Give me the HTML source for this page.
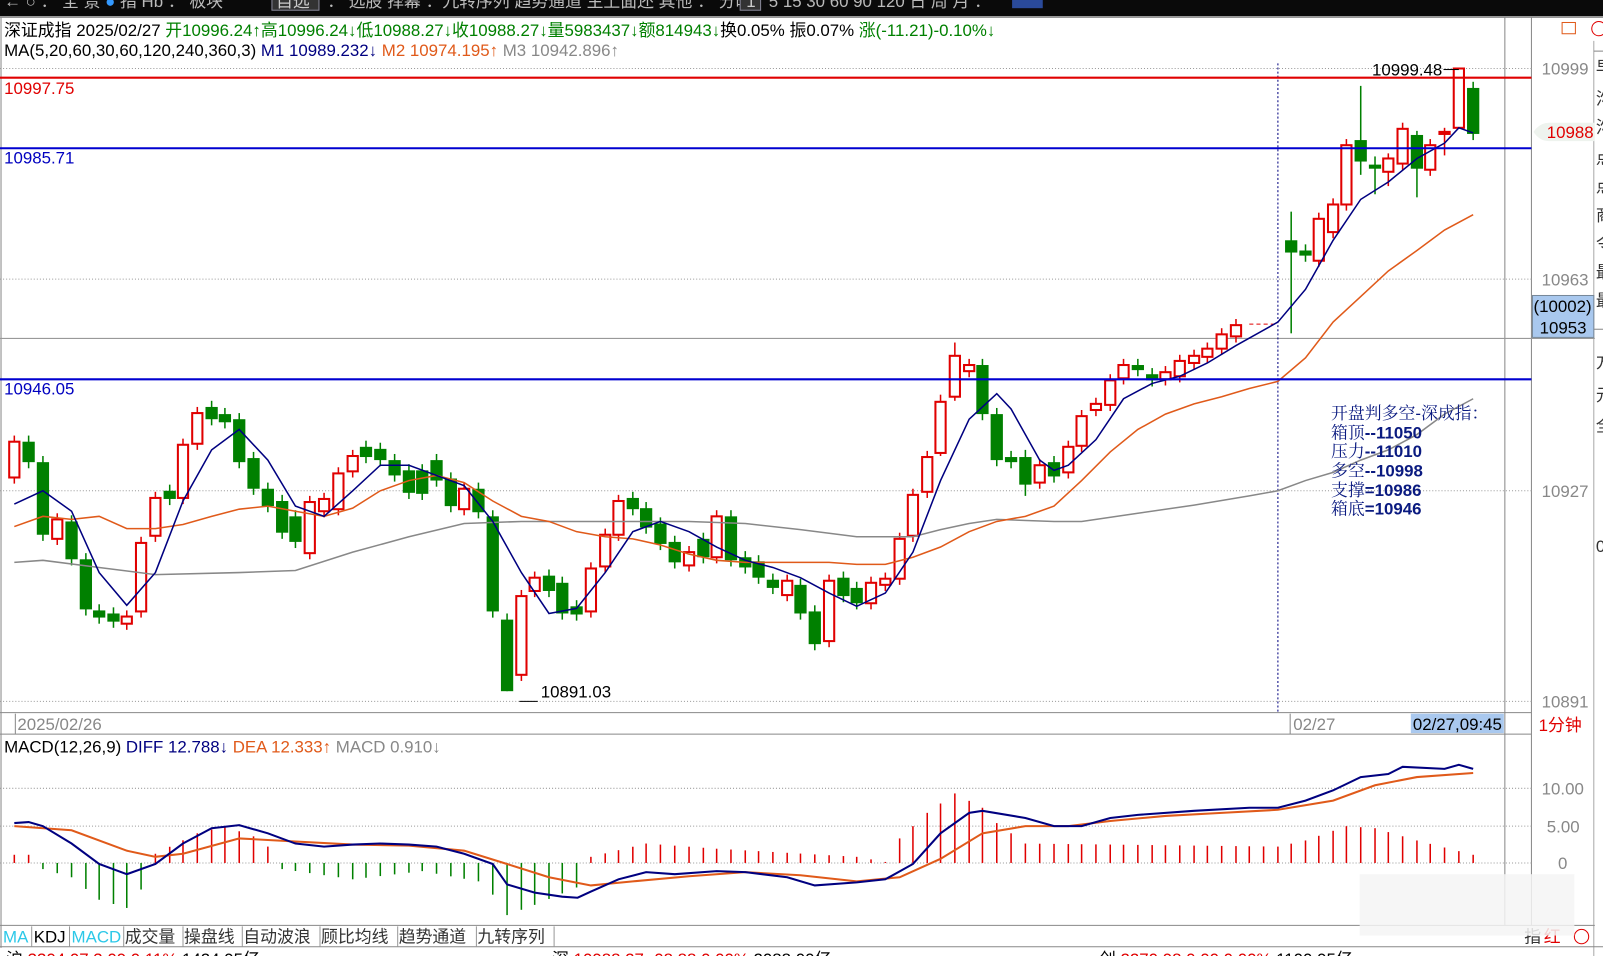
<!DOCTYPE html>
<html><head><meta charset="utf-8">
<style>
html,body{margin:0;padding:0;background:#fff;overflow:hidden}
svg{display:block}
text{font-family:"Liberation Sans","Noto Sans CJK SC",sans-serif;font-size:16.5px}
.an{font-family:"Liberation Sans","Noto Serif CJK SC",serif;font-size:16.5px}
.an tspan.n{font-weight:bold}
</style></head><body>
<svg id="s" width="1603" height="956" viewBox="0 0 1568 935" preserveAspectRatio="none" xmlns="http://www.w3.org/2000/svg">
<rect x="0" y="0" width="1568" height="935" fill="#fff"/>
<!-- top bar -->
<rect x="0" y="0" width="1568" height="16" fill="#0a0a0a"/>
<text x="4" y="7" fill="#bbb" font-size="15">← ○ ： 全 景 <tspan fill="#39f">●</tspan> 指 <tspan>Hb</tspan> ： 板块 </text>
<rect x="266" y="-4" width="46" height="14" fill="#333" stroke="#889"/>
<text x="270" y="7" fill="#ccc" font-size="15">自选</text>
<text x="320" y="7" fill="#bbb" font-size="15">：  选股  择幕   ：九转序列  趋势通道  主上面还  其他    ：  分时</text>
<rect x="724" y="-4" width="20" height="14" fill="#333" stroke="#889"/>
<text x="730" y="7" fill="#ccc" font-size="15">1</text>
<text x="752" y="7" fill="#bbb" font-size="15">5  15  30  60  90  120  日  周  月   ：</text>
<rect x="990" y="-4" width="30" height="12" fill="#2a4a9a"/>
<!-- header lines -->
<text x="4" y="35" fill="#000">深证成指 2025/02/27 <tspan fill="#008000">开10996.24↑高10996.24↓低10988.27↓收10988.27↓量5983437↓额814943↓</tspan>换0.05% 振0.07%  <tspan fill="#008000">涨(-11.21)-0.10%↓</tspan></text>
<text x="4" y="55" fill="#000">MA(5,20,60,30,60,120,240,360,3)  <tspan fill="#000080">M1 10989.232↓</tspan>  <tspan fill="#e05a1a">M2 10974.195↑</tspan>  <tspan fill="#888">M3 10942.896↑</tspan></text>
<!-- frame lines -->
<line x1="0" y1="17" x2="1568" y2="17" stroke="#888"/>
<line x1="1472" y1="17" x2="1472" y2="905" stroke="#888"/>
<line x1="1498" y1="17" x2="1498" y2="905" stroke="#888"/>
<line x1="1559" y1="40" x2="1559" y2="935" stroke="#aaa"/>
<line x1="1" y1="17" x2="1" y2="927" stroke="#888"/>
<line x1="0" y1="331" x2="1560" y2="331" stroke="#999"/>
<line x1="0" y1="697" x2="1498" y2="697" stroke="#888"/>
<line x1="0" y1="718" x2="1498" y2="718" stroke="#888"/>
<line x1="0" y1="905" x2="1560" y2="905" stroke="#888"/>
<line x1="0" y1="926" x2="1568" y2="926" stroke="#888"/>
<!-- grid -->
<g stroke="#999" stroke-dasharray="1,2">
<line x1="0" y1="67" x2="1498" y2="67"/>
<line x1="0" y1="273" x2="1498" y2="273"/>
<line x1="0" y1="480" x2="1498" y2="480"/>
<line x1="0" y1="686" x2="1498" y2="686"/>
<line x1="0" y1="771" x2="1498" y2="771"/>
<line x1="0" y1="808" x2="1498" y2="808"/>
<line x1="0" y1="844" x2="1498" y2="844"/>
</g>
<line x1="1250" y1="62" x2="1250" y2="697" stroke="#000080" stroke-dasharray="2,2"/>
<g id="chart"></g>
<!-- horizontal levels -->
<line x1="0" y1="76" x2="1498" y2="76" stroke="#e00000" stroke-width="2"/>
<line x1="0" y1="145" x2="1498" y2="145" stroke="#0000d0" stroke-width="2"/>
<line x1="0" y1="371" x2="1498" y2="371" stroke="#0000d0" stroke-width="2"/>
<text x="4" y="92" fill="#e00000">10997.75</text>
<text x="4" y="160" fill="#0000c0">10985.71</text>
<text x="4" y="386" fill="#0000c0">10946.05</text>
<text x="1342" y="74" fill="#000">10999.48</text>
<line x1="1412" y1="68" x2="1427" y2="68" stroke="#000"/>
<text x="529" y="682" fill="#000">10891.03</text>
<line x1="508" y1="686" x2="526" y2="686" stroke="#000"/>
<!-- annotation -->
<g fill="#0a1a80" class="an">
<text x="1302" y="410" class="an">开盘判多空-深成指：</text>
<text x="1302" y="429" class="an">箱顶<tspan class="n">--11050</tspan></text>
<text x="1302" y="447" class="an">压力<tspan class="n">--11010</tspan></text>
<text x="1302" y="466" class="an">多空<tspan class="n">--10998</tspan></text>
<text x="1302" y="485" class="an">支撑<tspan class="n">=10986</tspan></text>
<text x="1302" y="503" class="an">箱底<tspan class="n">=10946</tspan></text>
</g>
<!-- right axis -->
<g fill="#888">
<text x="1508" y="73">10999</text>
<text x="1508" y="279">10963</text>
<text x="1508" y="486">10927</text>
<text x="1508" y="692">10891</text>
</g>
<path d="M1500 129 Q1506 120 1515 120 L1560 120 L1560 138 L1515 138 Q1506 138 1500 129Z" fill="#eef3ee"/>
<text x="1513" y="135" fill="#e00000">10988</text>
<rect x="1499" y="289" width="60" height="41" fill="#a9c8ee" stroke="#789"/>
<text x="1500" y="305" fill="#000">(10002)</text>
<text x="1506" y="326" fill="#000">10953</text>
<rect x="1528" y="22" width="13" height="11" fill="none" stroke="#e05a1a"/>
<circle cx="1564" cy="28" r="7" fill="none" stroke="#e00000"/>
<line x1="1559" y1="50" x2="1568" y2="50" stroke="#888"/>
<line x1="1559" y1="322" x2="1568" y2="322" stroke="#888"/>
<g fill="#333">
<text x="1561" y="72">早</text><text x="1561" y="102">沟</text><text x="1561" y="130">沟</text><text x="1561" y="160">点</text><text x="1561" y="188">点</text><text x="1561" y="216">商</text><text x="1561" y="244">令</text><text x="1561" y="272">最</text><text x="1561" y="300">最</text>
<text x="1561" y="360">方</text><text x="1561" y="392">元</text><text x="1561" y="422">全</text><text x="1561" y="540">0</text>
</g>
<!-- date bar -->
<line x1="15" y1="698" x2="15" y2="718" stroke="#888"/>
<text x="17" y="714" fill="#888">2025/02/26</text>
<line x1="1262" y1="698" x2="1262" y2="718" stroke="#888"/>
<text x="1265" y="714" fill="#888">02/27</text>
<rect x="1380" y="698" width="91" height="19" fill="#a9c8ee"/>
<text x="1382" y="714" fill="#000">02/27,09:45</text>
<text x="1505" y="715" fill="#e00000">1分钟</text>
<!-- MACD header -->
<text x="4" y="736" fill="#000">MACD(12,26,9)  <tspan fill="#000080">DIFF 12.788↓</tspan>  <tspan fill="#e05a1a">DEA 12.333↑</tspan>  <tspan fill="#888">MACD 0.910↓</tspan></text>
<g fill="#888">
<text x="1508" y="777">10.00</text>
<text x="1513" y="814">5.00</text>
<text x="1524" y="850">0</text>
</g>
<!-- tabs -->
<g font-size="16.5">
<text x="3" y="922" fill="#2cc8e8" font-size="16.5">MA</text>
<line x1="31" y1="906" x2="31" y2="926" stroke="#999"/>
<text x="33" y="922" fill="#000" font-size="16.5">KDJ</text>
<line x1="68" y1="906" x2="68" y2="926" stroke="#999"/>
<text x="70" y="922" fill="#2cc8e8" font-size="16.5">MACD</text>
<line x1="121" y1="906" x2="121" y2="926" stroke="#999"/>
<text x="122" y="922" fill="#333" font-size="16.5">成交量</text>
<line x1="179" y1="906" x2="179" y2="926" stroke="#999"/>
<text x="180" y="922" fill="#333" font-size="16.5">操盘线</text>
<line x1="237" y1="906" x2="237" y2="926" stroke="#999"/>
<text x="238" y="922" fill="#333" font-size="16.5">自动波浪</text>
<line x1="313" y1="906" x2="313" y2="926" stroke="#999"/>
<text x="314" y="922" fill="#333" font-size="16.5">顾比均线</text>
<line x1="389" y1="906" x2="389" y2="926" stroke="#999"/>
<text x="390" y="922" fill="#333" font-size="16.5">趋势通道</text>
<line x1="466" y1="906" x2="466" y2="926" stroke="#999"/>
<text x="467" y="922" fill="#333" font-size="16.5">九转序列</text>
<line x1="542" y1="906" x2="542" y2="926" stroke="#999"/>
<text x="1491" y="922" fill="#333">指</text><text x="1510" y="922" fill="#e00000">红</text>
<circle cx="1547" cy="916" r="7" fill="none" stroke="#e00000"/>
</g>
<rect x="1330" y="855" width="210" height="60" fill="#f4f4f4" opacity="0.85"/>
<!-- bottom cut row -->
<text x="6" y="944" font-size="19" fill="#000">沪 <tspan fill="#e00000">3304.07 3.09 0.11%</tspan> 1424.95亿</text>
<text x="540" y="944" font-size="19" fill="#000">深 <tspan fill="#e00000">10988.27 -08.88 0.00%</tspan>  2088.00亿</text>
<text x="1075" y="944" font-size="19" fill="#000">创 <tspan fill="#e00000">2270.98 0.00 0.00%</tspan> 1100.95亿</text>
</svg>
<script>
var NS="http://www.w3.org/2000/svg",g=document.getElementById("chart");
function el(t,a){var e=document.createElementNS(NS,t);for(var k in a)e.setAttribute(k,a[k]);g.appendChild(e);return e;}
var R="#e00000",G="#008000";
var c=[[14,1,432,467],[28,0,432,452],[42,0,452,523],[56,1,508,527],[70,0,510,547],[84,0,547,596],[97,0,597,604],[111,0,600,608],[124,1,603,610],[138,1,531,598],[152,1,487,524],[166,0,480,488],[179,1,435,487],[193,1,404,434],[207,0,398,410],[220,0,405,413],[234,0,410,452],[248,0,448,478],[262,0,478,495],[276,0,490,521],[289,0,505,530],[303,1,491,541],[317,1,488,500],[331,1,463,498],[345,1,446,461],[358,0,437,447],[372,0,439,450],[386,0,450,465],[400,0,460,482],[413,0,460,483],[427,0,450,470],[441,0,468,495],[454,1,478,498],[468,0,478,501],[482,0,505,598],[496,0,606,676],[510,1,583,660],[523,1,565,578],[537,0,563,578],[550,0,570,600],[564,0,593,601],[578,1,556,598],[592,1,523,554],[605,1,490,523],[619,0,487,498],[632,0,497,516],[646,0,512,532],[660,0,530,550],[674,1,540,553],[688,0,527,545],[701,1,505,545],[715,0,505,548],[729,0,545,555],[742,0,549,565],[756,0,567,575],[770,1,568,582],[783,0,572,600],[797,0,598,630],[811,1,568,627],[825,0,565,583],[838,0,575,590],[852,1,570,590],[866,1,566,572],[880,1,527,566],[893,1,484,524],[907,1,447,481],[920,1,393,443],[934,1,348,388],[948,1,357,363],[961,0,357,405],[975,0,405,450],[989,0,447,452],[1003,0,447,474],[1017,1,455,472],[1031,0,452,466],[1045,1,437,462],[1058,1,407,436],[1072,1,395,401],[1086,1,372,396],[1099,1,357,370],[1113,0,357,362],[1127,0,366,372],[1140,1,364,371],[1154,1,353,368],[1168,1,348,355],[1181,1,341,349],[1195,1,327,341],[1209,1,318,329],[1263,0,235,247],[1277,0,245,250],[1290,1,214,255],[1304,1,200,227],[1317,1,142,200],[1331,0,137,158],[1345,0,161,165],[1358,1,155,168],[1372,1,126,160],[1386,0,132,165],[1399,1,142,166],[1413,1,129,131],[1427,1,67,125],[1441,0,86,131]];
var wk={496:[600,676],934:[335,392],1331:[84,171],1263:[207,326],1427:[67,125],1386:[128,193],1345:[153,190],1358:[150,182],1413:[125,152],1003:[440,485],920:[386,446]};
el("path",{d:"M1222 317 L1250 317",stroke:R,"stroke-dasharray":"4,3",fill:"none"});
c.forEach(function(d){var x=d[0],col=d[1]?R:G,t=d[2],b=d[3];var w=wk[x]||[t-6,b+6];
el("line",{x1:x,y1:w[0],x2:x,y2:w[1],stroke:col,"stroke-width":1.5});
if(d[1])el("rect",{x:x-5,y:t,width:10,height:Math.max(b-t,1.5),fill:"#fff",stroke:col,"stroke-width":2});
else el("rect",{x:x-6,y:t,width:12,height:Math.max(b-t,2),fill:col});});
function pl(p,col,w){el("polyline",{points:p.map(function(a){return a.join(",")}).join(" "),fill:"none",stroke:col,"stroke-width":w||1.5});}
pl([[14,550],[42,548],[97,555],[152,562],[234,560],[289,558],[345,540],[400,525],[454,512],[510,510],[564,510],[619,510],[674,510],[729,512],[783,518],[838,525],[893,525],[920,518],[948,512],[975,508],[1031,510],[1058,510],[1113,502],[1168,494],[1222,485],[1250,480],[1277,470],[1304,462],[1331,450],[1358,440],[1386,425],[1413,405],[1441,390]],"#888");
pl([[14,515],[42,505],[70,508],[97,505],[124,517],[152,517],[179,513],[207,505],[234,498],[262,495],[289,500],[317,505],[345,497],[372,480],[400,470],[427,465],[454,472],[482,490],[510,505],[537,510],[564,520],[592,525],[619,527],[646,533],[674,542],[701,548],[729,550],[756,550],[783,550],[811,550],[838,552],[866,552],[893,545],[920,535],[948,520],[975,510],[1003,505],[1031,495],[1058,470],[1086,442],[1113,420],[1140,405],[1168,395],[1195,388],[1222,380],[1250,373],[1277,350],[1304,315],[1331,290],[1358,265],[1386,245],[1413,225],[1441,210]],"#e05a1a");
pl([[14,493],[42,480],[70,500],[97,560],[124,592],[152,560],[179,490],[207,440],[234,420],[262,450],[289,495],[317,505],[345,480],[372,455],[400,455],[427,465],[454,475],[482,510],[510,560],[537,600],[564,595],[592,560],[619,520],[646,510],[674,520],[701,535],[729,548],[756,555],[783,565],[811,580],[838,593],[866,580],[893,540],[920,470],[948,410],[975,385],[989,400],[1017,450],[1031,460],[1045,455],[1072,430],[1099,390],[1127,375],[1154,368],[1181,355],[1209,338],[1250,315],[1277,283],[1304,235],[1331,195],[1358,178],[1386,155],[1413,140],[1427,125],[1441,130]],"#000080");
function interp(k,x){for(var i=0;i<k.length-1;i++){if(x>=k[i][0]&&x<=k[i+1][0]){var f=(x-k[i][0])/(k[i+1][0]-k[i][0]);return k[i][1]+f*(k[i+1][1]-k[i][1]);}}return k[k.length-1][1];}
var hk=[[14,836],[28,836],[42,850],[70,858],[97,880],[124,888],[138,870],[152,835],[193,815],[220,808],[248,818],[262,828],[276,850],[345,860],[413,852],[468,862],[482,875],[496,895],[523,885],[564,868],[578,838],[632,825],[700,830],[838,838],[866,843],[880,820],[907,795],[934,776],[961,790],[975,805],[1003,825],[1250,828],[1277,822],[1317,808],[1345,810],[1386,822],[1441,836]];
c.concat([[1222],[1236],[1250]]).forEach(function(d){var x=d[0],y=interp(hk,x);var col=y<844?R:G;
el("line",{x1:x,y1:844,x2:x,y2:y,stroke:col,"stroke-width":1.5});});
pl([[14,808],[70,812],[124,832],[152,838],[179,835],[234,820],[289,823],[345,826],[400,827],[454,832],[496,845],[537,858],[578,866],[619,862],[674,857],[729,853],[783,856],[838,862],[880,858],[920,840],[961,815],[1003,808],[1045,808],[1086,803],[1140,798],[1195,795],[1250,792],[1304,783],[1345,768],[1386,760],[1441,756]],"#e05a1a",2);
pl([[14,805],[28,804],[42,808],[70,825],[97,845],[124,855],[152,845],[179,825],[207,810],[234,807],[262,815],[289,825],[317,828],[345,826],[372,825],[400,826],[427,828],[454,835],[482,845],[496,865],[523,873],[550,877],[565,878],[578,872],[605,860],[632,853],[660,855],[701,852],[729,853],[770,858],[797,866],[838,863],[866,860],[893,845],[920,815],[948,795],[961,793],[1003,800],[1031,808],[1058,808],[1086,800],[1113,797],[1168,793],[1222,790],[1250,790],[1277,783],[1304,773],[1331,760],[1358,757],[1372,750],[1413,752],[1427,748],[1441,752]],"#000080",2);
</script>
</body></html>
